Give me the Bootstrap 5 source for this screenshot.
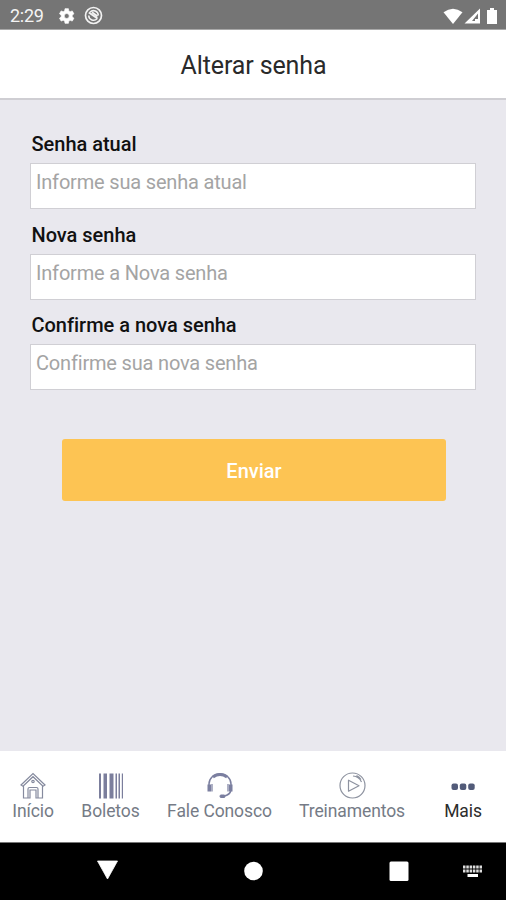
<!DOCTYPE html>
<html lang="pt-BR">
<head>
<meta charset="utf-8">
<meta name="viewport" content="width=device-width, initial-scale=1">
<title>Alterar senha</title>
<link href="https://cdn.jsdelivr.net/npm/bootstrap@5.3.0/dist/css/bootstrap.min.css" rel="stylesheet">
<style>
body{font-family:Roboto,"Liberation Sans",sans-serif;background:#e9e8ee;height:900px;overflow:hidden;color:#111}
svg{display:block;flex:none}
.status-bar{height:30px;background:#757575;color:#f4f4f4;font-size:18px;line-height:30px;padding:2px 7px 0 10px;border-bottom:1px solid #a8a8a8}
.clock{width:46px;letter-spacing:-.3px}
.title-bar{height:70px;background:#fff;border-bottom:2px solid #cfced3;font-size:25px;line-height:30px;font-weight:400;letter-spacing:-.12px;color:#2a2a2a;padding:4px 0 0 1px}
.form-area{padding:30px 30px 0 30px}
.field{height:90.7px}
.field label{display:block;font-size:20px;line-height:28px;height:33px;font-weight:500;letter-spacing:-.02px;padding-left:1.500px}
.field .form-control{height:46px;border:1px solid #d0cfd4;border-radius:0;padding:0 5px 8px 5px;font-size:20px;font-weight:400;letter-spacing:-.18px;line-height:36px;color:#333}
.field .form-control::placeholder{color:#a4a4a4;opacity:1}
.btn-send{width:384px;height:62px;margin:37px auto 0;background:#fdc453;color:#fff;font-size:20px;font-weight:500;border:0;border-radius:3px;display:block;padding-top:8px;transform:translateX(1px)}
.tab-bar{height:91px;background:#fff;font-size:17.500px;letter-spacing:-.1px;line-height:24px;color:#757b86}
.tab-item{padding-top:21px}
.t1{width:66px}.t2{width:89px}.t3{width:129px}.t4{width:136px}.t5{width:86px;color:#2c2c2c}
.system-bar{height:58px;background:#000;border-top:1px solid #777}
</style>
</head>
<body class="d-flex flex-column">
<header class="status-bar d-flex align-items-center">
  <span class="clock">2:29</span>
  <svg width="20" height="20" viewBox="0 0 24 24" fill="#fff"><path d="M19.4 13a7.500 7.500 0 0 0 0-2l2.100-1.600-2-3.500-2.500 1a7.700 7.700 0 0 0-1.700-1L14.900 3.200h-4.100L10.400 5.900a7.700 7.700 0 0 0-1.700 1l-2.500-1-2 3.500L6.300 11a7.500 7.500 0 0 0 0 2l-2.100 1.600 2 3.500 2.500-1a7.700 7.700 0 0 0 1.700 1l.4 2.700h4.100l.4-2.700a7.700 7.700 0 0 0 1.700-1l2.500 1 2-3.500zM12.850 15a3 3 0 1 1 0-6 3 3 0 0 1 0 6z" stroke="#fff" stroke-width=".8"/></svg>
  <svg class="ms-2" width="19" height="19" viewBox="0 0 19 19" fill="none" stroke="#f2f2f2"><circle cx="9.500" cy="9.500" r="8" stroke-width="1.700"/><path d="M4.700 9.500a4.800 4.800 0 0 0 8.500 3M6 6.200a4.800 4.800 0 0 1 8.300 3.300" stroke-width="1.500"/><path d="M4.800 6.500l8.700 6M8 6.200l5.500 4" stroke-width="1.800"/></svg>
  <svg class="ms-auto" width="56" height="20" viewBox="0 0 56 20" fill="#fff"><path d="M.5 6.300Q10 -1 19.500 6.300L10 18z"/><path d="M21.500 17.500L37 2.500v15zM35 7.500L29 15h3V13h3z" fill-rule="evenodd"/><path d="M47 2h4v2h3v14H44V4h3z"/></svg>
</header>
<h1 class="title-bar d-flex align-items-center justify-content-center m-0">Alterar senha</h1>
<main class="form-area flex-grow-1">
  <form>
    <div class="field"><label for="atual">Senha atual</label><input class="form-control" id="atual" type="password" placeholder="Informe sua senha atual"></div>
    <div class="field"><label for="nova">Nova senha</label><input class="form-control" id="nova" type="password" placeholder="Informe a Nova senha"></div>
    <div class="field"><label for="conf">Confirme a nova senha</label><input class="form-control" id="conf" type="password" placeholder="Confirme sua nova senha"></div>
    <button class="btn btn-send" type="button">Enviar</button>
  </form>
</main>
<nav class="tab-bar d-flex">
  <div class="tab-item t1 d-flex flex-column align-items-center"><svg width="26" height="27" viewBox="0 0 26 27" fill="none" stroke="#858a9e" stroke-width="1.200"><path d="M1 13L13 1.500 25 13l-2 1.300L13 4.700 3 14.300zM3.500 14v12h6.500V18h6v8h6.500V14M8 26v-9q0-1.500 1.500-1.500h7q1.500 0 1.500 1.500V26"/><circle cx="13" cy="9.500" r="1.200"/></svg><span>Início</span></div>
  <div class="tab-item t2 d-flex flex-column align-items-center"><svg width="26" height="27" viewBox="0 0 26 27" fill="#7b7e9c"><path d="M1 1.500h2v25H1zM5.500 1.500h3.500v25H5.500zM11.500 1.500h4v25h-4zM17.500 1.500h1.500v25h-1.500zM20.500 1.500H22v25h-1.500zM23.800 1.500h1.200v25h-1.200z"/></svg><span>Boletos</span></div>
  <div class="tab-item t3 d-flex flex-column align-items-center"><svg width="28" height="27" viewBox="0 0 28 27" fill="none" stroke="#7b7fa0"><path d="M3 13V12a11 10.300 0 0 1 22 0v6q-1 5-7 6" stroke-width="1.500"/><path d="M7 5q7-5 14 0" stroke-width="2.800"/><path d="M3.300 12.500v7M24.700 12.500v7" stroke-width="3.600"/><path d="M6 12v7.500M22 12v7.500" stroke-width="1.200"/><rect x="14" y="23" width="5" height="2.500" rx="1" fill="#7b7fa0"/></svg><span>Fale Conosco</span></div>
  <div class="tab-item t4 d-flex flex-column align-items-center"><svg width="27" height="27" viewBox="0 0 27 27" fill="none" stroke="#8e93a0" stroke-width="1.200"><circle cx="13.500" cy="13.500" r="12.500"/><path d="M9.500 8.200v11L20 13.700zM14 4q6 .5 8.500 6M17.500 3.500q3 1.500 4.500 4" stroke-linejoin="round"/></svg><span>Treinamentos</span></div>
  <div class="tab-item t5 d-flex flex-column align-items-center"><svg width="26" height="27" viewBox="0 0 26 27" fill="#525b79"><rect x="1.500" y="11.500" width="6.500" height="6.500" rx="2"/><rect x="9.800" y="11.500" width="6.500" height="6.500" rx="2"/><rect x="18.200" y="11.500" width="6.500" height="6.500" rx="2"/></svg><span>Mais</span></div>
</nav>
<footer class="system-bar">
  <svg width="506" height="57" viewBox="0 843 506 57" fill="#fff"><path d="M97.500 861h20L107.500 879z" stroke="#fff" stroke-width=".8" stroke-linejoin="round"/><circle cx="253.500" cy="871" r="9.300"/><rect x="389.500" y="861.500" width="19" height="19.500" rx="1.500"/><path d="M463 867h19M463 871h19" stroke="#ddd" stroke-width="3" stroke-dasharray="2.500 .8"/><path d="M467.500 874h10.500v3h-10.500z"/></svg>
</footer>
<script src="https://cdn.jsdelivr.net/npm/bootstrap@5.3.0/dist/js/bootstrap.bundle.min.js"></script>
</body>
</html>
